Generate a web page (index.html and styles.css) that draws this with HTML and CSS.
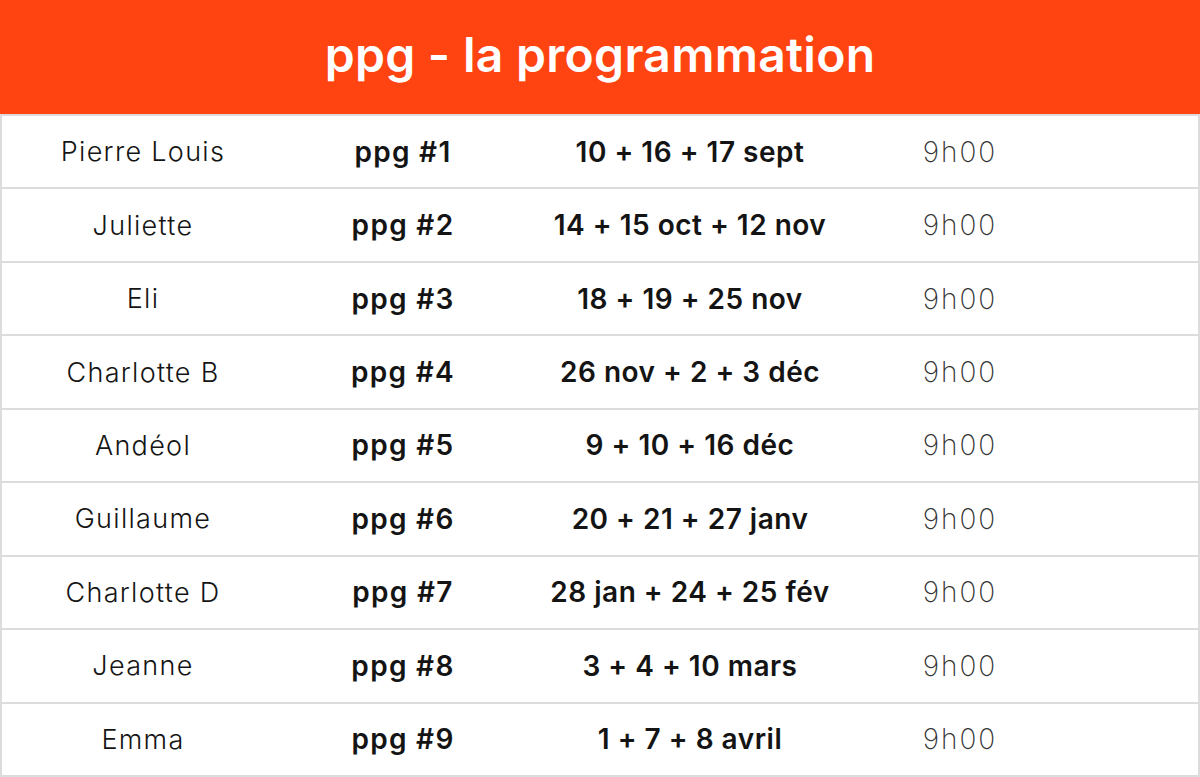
FILE: index.html
```html
<!DOCTYPE html>
<html lang="fr">
<head>
<meta charset="utf-8">
<title>ppg - la programmation</title>
<link rel="stylesheet" href="styles.css">
</head>
<body>
<div class="page">
  <header class="banner"><h1>ppg - la programmation</h1></header>
  <div class="table">
    <div class="row"><span class="name">Pierre Louis</span><span class="ppg">ppg #1</span><span class="dates">10 + 16 + 17 sept</span><span class="time">9h00</span></div>
    <div class="row"><span class="name">Juliette</span><span class="ppg">ppg #2</span><span class="dates">14 + 15 oct + 12 nov</span><span class="time">9h00</span></div>
    <div class="row"><span class="name">Eli</span><span class="ppg">ppg #3</span><span class="dates">18 + 19 + 25 nov</span><span class="time">9h00</span></div>
    <div class="row"><span class="name">Charlotte B</span><span class="ppg">ppg #4</span><span class="dates">26 nov + 2 + 3 déc</span><span class="time">9h00</span></div>
    <div class="row"><span class="name">Andéol</span><span class="ppg">ppg #5</span><span class="dates">9 + 10 + 16 déc</span><span class="time">9h00</span></div>
    <div class="row"><span class="name">Guillaume</span><span class="ppg">ppg #6</span><span class="dates">20 + 21 + 27 janv</span><span class="time">9h00</span></div>
    <div class="row"><span class="name">Charlotte D</span><span class="ppg">ppg #7</span><span class="dates">28 jan + 24 + 25 fév</span><span class="time">9h00</span></div>
    <div class="row"><span class="name">Jeanne</span><span class="ppg">ppg #8</span><span class="dates">3 + 4 + 10 mars</span><span class="time">9h00</span></div>
    <div class="row"><span class="name">Emma</span><span class="ppg">ppg #9</span><span class="dates">1 + 7 + 8 avril</span><span class="time">9h00</span></div>
  </div>
</div>
</body>
</html>
```

FILE: styles.css
```css
html, body {
  margin: 0;
  padding: 0;
  background: #ffffff;
}
.page {
  width: 1200px;
  height: 777px;
  font-family: Inter, "Liberation Sans", sans-serif;
  color: #141414;
  overflow: hidden;
}
.banner {
  height: 114px;
  background: #ff4411;
  display: flex;
  align-items: center;
  justify-content: center;
}
.banner h1 {
  margin: 0;
  color: #ffffff;
  font-size: 48px;
  font-weight: 600;
  letter-spacing: 0.3px;
  padding-bottom: 6px;
}
.table {
  border: 2px solid #dcdcdc;
  border-top-width: 1px;
  height: 660px;
  display: flex;
  flex-direction: column;
}
.row {
  flex: 1;
  display: grid;
  grid-template-columns: 282px 238px 336px 204px 1fr;
  align-items: center;
  border-top: 2px solid #dcdcdc;
  font-size: 27px;
}
.row:first-child {
  border-top-width: 1px;
}
.row > span {
  text-align: center;
  white-space: nowrap;
}
.name {
  font-weight: 300;
  letter-spacing: 1.3px;
}
.ppg, .dates {
  font-size: 28px;
  font-weight: 600;
}
.ppg {
  letter-spacing: 1.3px;
}
.dates {
  letter-spacing: 0.5px;
}
.time {
  font-size: 28px;
  font-weight: 200;
  color: #333333;
  letter-spacing: 2px;
}
```
